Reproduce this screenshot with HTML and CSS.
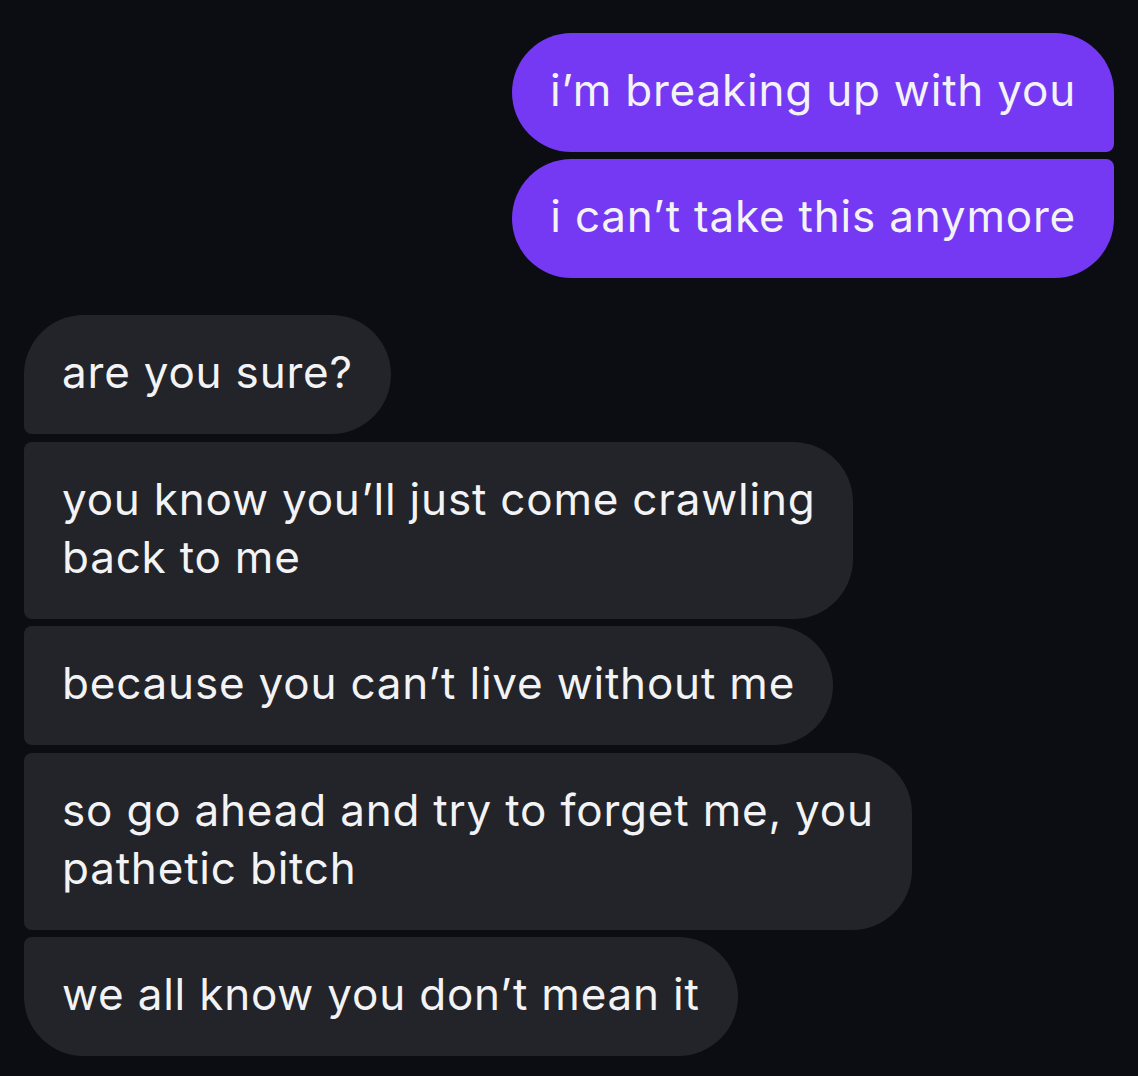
FILE: index.html
```html
<!DOCTYPE html>
<html>
<head>
<meta charset="utf-8">
<link rel="stylesheet" href="styles.css">
</head>
<body>
<div class="chat">
  <div class="group sent">
    <div class="bubble first">i’m breaking up with you</div>
    <div class="bubble last">i can’t take this anymore</div>
  </div>
  <div class="group received">
    <div class="bubble first">are you sure?</div>
    <div class="bubble mid">you know you’ll just come crawling<br>back to me</div>
    <div class="bubble mid">because you can’t live without me</div>
    <div class="bubble mid">so go ahead and try to forget me, you<br>pathetic bitch</div>
    <div class="bubble last">we all know you don’t mean it</div>
  </div>
</div>
</body>
</html>
```

FILE: styles.css
```css
html, body {
  margin: 0;
  padding: 0;
  background: #0b0d13;
}
body {
  font-family: Inter, "Liberation Sans", sans-serif;
  color: #f3f3f5;
}
.chat {
  padding: 33px 24px 20px 24px;
  display: flex;
  flex-direction: column;
  gap: 37px;
}
.group {
  display: flex;
  flex-direction: column;
  gap: 7px;
}
.received { gap: 7.5px; }
.sent { align-items: flex-end; }
.received { align-items: flex-start; }
.bubble {
  font-size: 44px;
  line-height: 58px;
  padding: 28px 38px 33px 38px;
  white-space: nowrap;
  letter-spacing: 0.8px;
}
.sent .bubble {
  background: #7539f3;
}
.received .bubble {
  background: #222429;
}
.sent .first { border-radius: 60px 60px 8px 60px; }
.sent .last { border-radius: 60px 8px 60px 60px; }
.received .first { border-radius: 60px 60px 60px 8px; }
.received .mid { border-radius: 8px 60px 60px 8px; }
.received .last { border-radius: 8px 60px 60px 60px; }
```
